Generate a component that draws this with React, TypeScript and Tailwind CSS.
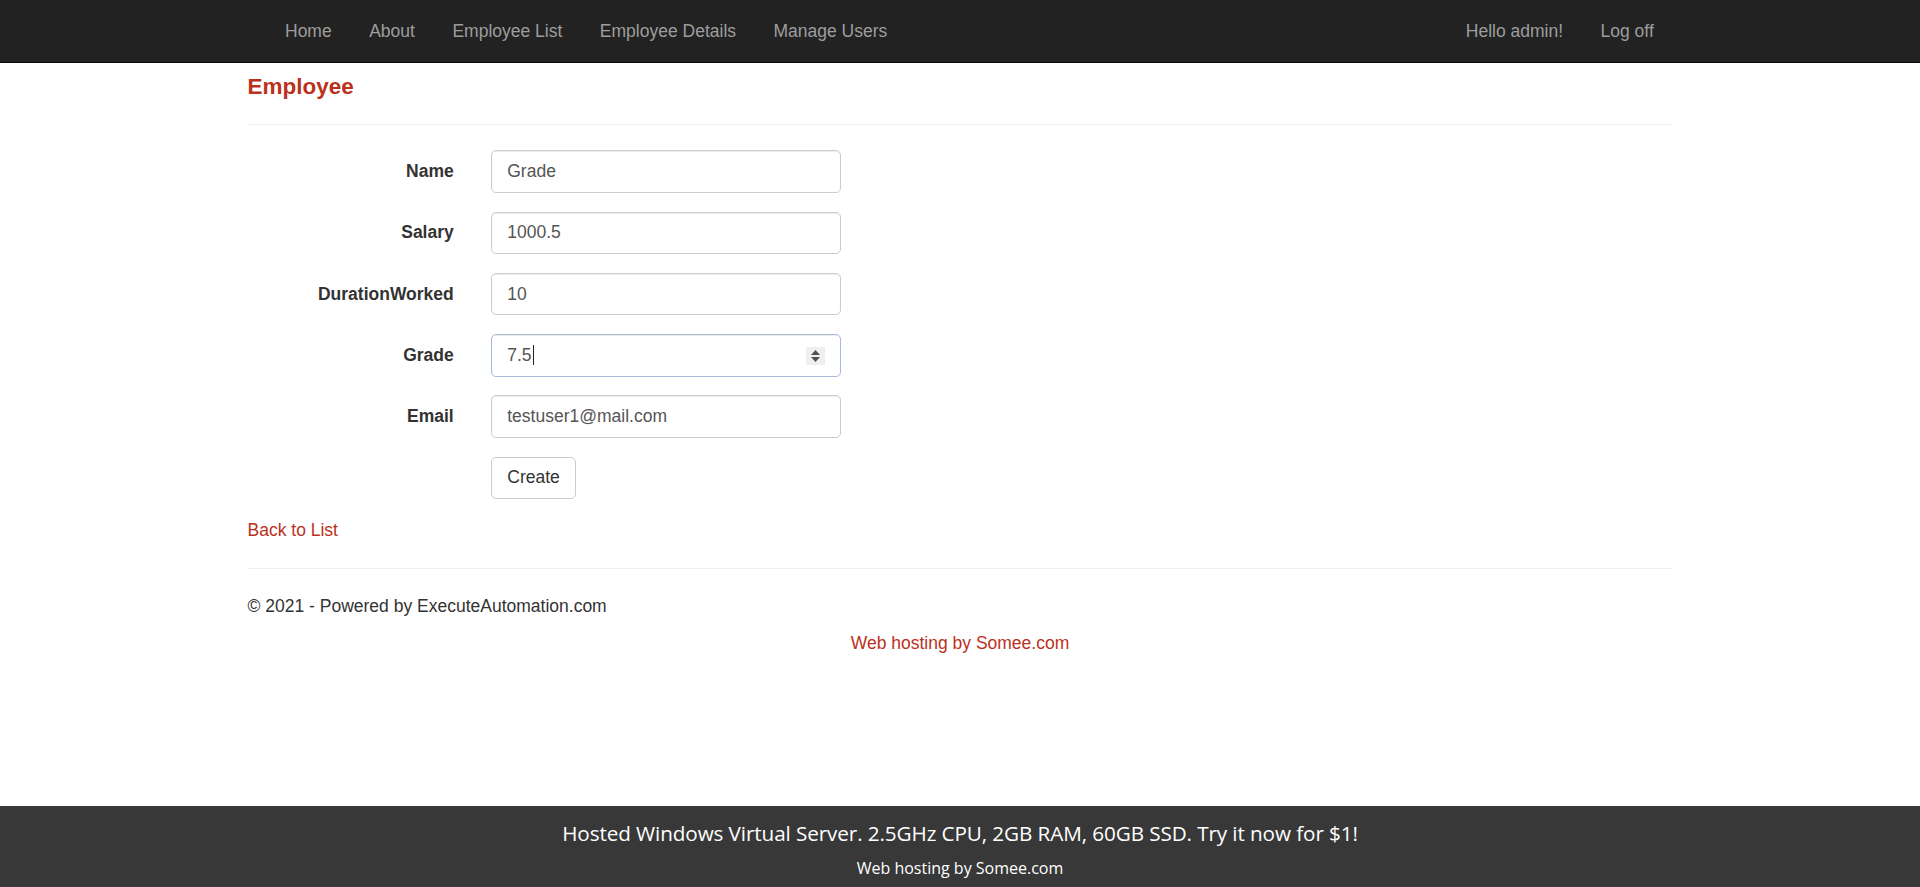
import type { ReactNode } from 'react'

const navLinks = ['Home', 'About', 'Employee List', 'Employee Details', 'Manage Users']

const fields: { label: string; value: string; focused?: boolean }[] = [
  { label: 'Name', value: 'Grade' },
  { label: 'Salary', value: '1000.5' },
  { label: 'DurationWorked', value: '10' },
  { label: 'Grade', value: '7.5', focused: true },
  { label: 'Email', value: 'testuser1@mail.com' },
]

export default function App() {
  return (
    <div className="flex min-h-screen flex-col bg-white font-['Liberation_Sans',Arial,sans-serif] text-[17.5px] leading-[25px] text-[#333]">
      <nav className="h-[62.5px] border-b border-[#080808] bg-[#222]">
        <div className="mx-auto flex w-[1462.5px] px-[18.75px]">
          <ul className="flex pl-[18.75px]">
            {navLinks.map((l) => (
              <NavItem key={l}>{l}</NavItem>
            ))}
          </ul>
          <ul className="ml-auto flex">
            <NavItem>Hello admin!</NavItem>
            <NavItem>Log off</NavItem>
          </ul>
        </div>
      </nav>

      <main className="mx-auto w-[1462.5px] px-[18.75px]">
        <h4 className="mt-[12.5px] mb-[24.5px] text-[22.5px] leading-[1.1] font-bold text-[#bb311c]">Employee</h4>
        <hr className="mb-[25px] border-t border-[#eee]" />

        <form className="flex flex-col gap-[18.75px]">
          {fields.map((f) => (
            <div key={f.label} className="flex items-start gap-[37.5px]">
              <label className="w-[206.25px] shrink-0 pt-[8.75px] text-right font-bold">{f.label}</label>
              <FieldBox value={f.value} focused={f.focused} />
            </div>
          ))}
          <div className="flex gap-[37.5px]">
            <div className="w-[206.25px] shrink-0" />
            <button
              type="button"
              className="h-[42.5px] rounded-[5px] border border-[#ccc] bg-white px-[15px] text-[#333]"
            >
              Create
            </button>
          </div>
        </form>

        <div className="mt-[18.75px]">
          <a className="text-[#bb311c]">Back to List</a>
        </div>

        <hr className="mt-[25px] mb-[25px] border-t border-[#eee]" />
        <footer>
          <p className="mb-[12.5px]">© 2021 - Powered by ExecuteAutomation.com</p>
        </footer>
        <div className="text-center">
          <a className="text-[#bb311c]">Web hosting by Somee.com</a>
        </div>
      </main>

      <div className="mt-auto h-[81px] bg-[#383838] pt-[12px] text-center font-['Open_Sans',sans-serif] text-white">
        <div className="text-[20.7px] leading-[30px] tracking-[-0.1px]">
          Hosted Windows Virtual Server. 2.5GHz CPU, 2GB RAM, 60GB SSD. Try it now for $1!
        </div>
        <div className="mt-[8px] text-[16px] leading-[24px]">Web hosting by Somee.com</div>
      </div>
    </div>
  )
}

function NavItem({ children }: { children: ReactNode }) {
  return (
    <li>
      <a className="block px-[18.75px] py-[18.5px] leading-[25px] text-[#9d9d9d]">{children}</a>
    </li>
  )
}

function FieldBox({ value, focused }: { value: string; focused?: boolean }) {
  return (
    <div
      className={`relative flex h-[42.5px] w-[350px] items-center rounded-[5px] border px-[15px] text-[#555] shadow-[inset_0_1px_1px_rgba(0,0,0,0.075)] ${
        focused ? 'border-[#a5bcd6]' : 'border-[#ccc]'
      }`}
    >
      <span>{value}</span>
      {focused && (
        <>
          <span className="ml-px inline-block h-[20px] w-px bg-[#222]" />
          <span className="absolute top-[12px] right-[15px] flex h-[18px] w-[19px] flex-col items-center justify-center gap-[2px] bg-[#efefef]">
            <svg width="9" height="5" viewBox="0 0 9 5">
              <path d="M0 5 L4.5 0 L9 5 Z" fill="#505050" />
            </svg>
            <svg width="9" height="5" viewBox="0 0 9 5">
              <path d="M0 0 L4.5 5 L9 0 Z" fill="#505050" />
            </svg>
          </span>
        </>
      )}
    </div>
  )
}
